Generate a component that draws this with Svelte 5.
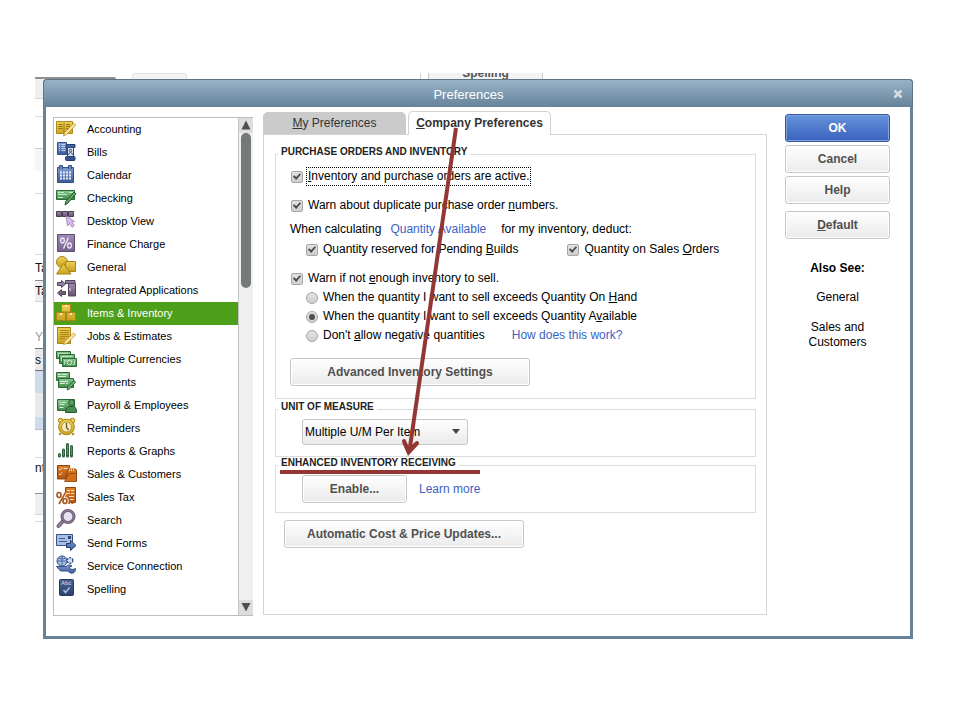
<script>
  const categories = [
    {
      name: 'Accounting',
      art: `<path d="M1.500 3.500H8l1 .7 1-.7h7.500v12H10l-1 .7-1-.7H1.500z" fill="url(#gold)" stroke="#b08a17"/><path d="M9 4.500V16" stroke="#a37d10"/><path d="M3.500 6.500h4M3.500 8.500h4M3.500 10.500h4M11 6.500h4M11 8.500h4M11 10.500h3" stroke="#8f6f10"/><path d="M8.500 18l1.200-3.500 9-9.300 2 1.800-8.900 9.500z" fill="#f6e4a0" stroke="#b8922a" stroke-width=".8"/>`
    },
    {
      name: 'Bills',
      art: `<path d="M2.500 1.500h9v12h-9z" fill="url(#blue)" stroke="#34508a"/><path d="M4 3.500h1m1.500 0h4M4 5.500h1m1.500 0h4M4 7.500h1m1.500 0h4M4 9.500h1m1.500 0h4" stroke="#c9d6f2"/><path d="M11 3.500h9v3h-9z" fill="#40649f" stroke="#243d70"/><path d="M12.500 6.500h6v10h-6z" fill="#e3e9f7" stroke="#2c467c"/><circle cx="15.500" cy="9.500" r="1.300" fill="none" stroke="#2c467c"/><path d="M13.800 14v-1.500l1.700-1 1.700 1V14" fill="none" stroke="#2c467c"/><rect x="10.500" y="15.500" width="9.500" height="4" rx="1" fill="#36538f" stroke="#243d70"/>`
    },
    {
      name: 'Calendar',
      art: `<path d="M2.500 3.500h16v15h-16z" fill="url(#blue)" stroke="#34508a"/><path d="M4.500 5V1.500h3V5M13.500 5V1.500h3V5" fill="#6d88bd" stroke="#34508a"/><path d="M5 8.500h11.500M5 11.500h11.500M5 14.500h11.500" stroke="#e6edfb" stroke-width="2" stroke-dasharray="2 1"/>`
    },
    {
      name: 'Checking',
      art: `<path d="M1.500 3.500h18v9h-18z" fill="url(#green)" stroke="#2c6b34"/><path d="M3 5.500h6M3 7.500h9M3 10.500h5M14 5.500h4" stroke="#c5eac8"/><path d="M10 18l.8-3.500 8.200-9.500 2 1.700-8.200 9.500z" fill="#5aa862" stroke="#22582a"/>`
    },
    {
      name: 'Desktop View',
      art: `<path d="M1.500 1.500h5v5h-5zM7.500 1.500h5v5h-5zM13.500 1.500h5v5h-5z" fill="url(#plum)" stroke="#4a3d52"/><path d="M11 5.500l8.500 6-2.800.5 2.500 3.500-2 1.700-2.700-3.700-2 2.500z" fill="#dcbcea" stroke="#9678a8" stroke-width=".8"/>`
    },
    {
      name: 'Finance Charge',
      art: `<path d="M2.500 1.500h17v17h-17z" fill="url(#purple)" stroke="#5e4f72"/><ellipse cx="7.500" cy="7.500" rx="1.800" ry="2.500" fill="none" stroke="#f0eaf6" stroke-width="1.300"/><ellipse cx="14.500" cy="12.500" rx="1.800" ry="2.500" fill="none" stroke="#f0eaf6" stroke-width="1.300"/><path d="M13.500 4.500l-5 11" stroke="#f0eaf6" stroke-width="1.300"/>`
    },
    {
      name: 'General',
      art: `<circle cx="7" cy="6" r="5.500" fill="url(#gold)" stroke="#a8841a"/><path d="M10.500 5.500h10v10h-10z" fill="url(#gold)" stroke="#a8841a"/><path d="M8.500 7.500l7.500 10.500H1.500z" fill="url(#gold)" stroke="#a8841a"/>`
    },
    {
      name: 'Integrated Applications',
      art: `<path d="M2.500 3.500h4v-2l4 3.500-4 3.500v-2h-4zM10.500 12.500h-4v-2l-4 3.500 4 3.500v-2h4z" fill="url(#plum)" stroke="#54455f"/><path d="M10.500 1.500h9.500v3h-9.500z" fill="#8c7a98" stroke="#54455f"/><path d="M13.500 4.500h7v12.500h-7z" fill="url(#plum)" stroke="#54455f"/><path d="M15 9v3" stroke="#efe6f5"/>`
    },
    {
      name: 'Items & Inventory',
      art: `<path d="M6.500 2.500h9v7.500h-9zM1.500 10.500h9v8h-9zM11.500 10.500h9v8h-9z" fill="url(#gold)" stroke="#a8841a"/><path d="M10 3h2v2h-2zM5 11h2v2h-2zM15 11h2v2h-2z" fill="#fbeeb0"/>`
    },
    {
      name: 'Jobs & Estimates',
      art: `<path d="M2.500 2.500h13v16h-13z" fill="url(#gold)" stroke="#a8841a"/><path d="M2 2.500h14" stroke="#8a6a10" stroke-dasharray="1 1"/><path d="M5 5.500h9M5 7.500h9M5 9.500h9M5 11.500h9M5 13.500h5" stroke="#a8841a"/><path d="M8.500 19.500l1.200-3 9-8.500 2 1.800-8.900 8.700z" fill="#fae6a8" stroke="#b8922a" stroke-width=".8"/>`
    },
    {
      name: 'Multiple Currencies',
      art: `<path d="M1.500 3.500h14v7h-14z" fill="url(#green)" stroke="#2c6b34"/><path d="M4.500 6.500h15v9h-15z" fill="url(#green)" stroke="#2c6b34"/><path d="M7.500 10.500h14v8h-14z" fill="url(#green)" stroke="#2c6b34"/><circle cx="14.500" cy="14.500" r="2.300" fill="none" stroke="#d5f2d6"/><path d="M9.500 16.500v-4h2M19.500 12.500v4h-2M3.500 9V5.500H13M6.500 13.500v-5H17" fill="none" stroke="#b7e2ba"/>`
    },
    {
      name: 'Payments',
      art: `<path d="M1.500 1.500h13v8h-13z" fill="url(#green)" stroke="#2c6b34"/><path d="M3 3.500h3m1 0h5M3 5.500h8" stroke="#d5f2d6"/><path d="M3.500 7.500h15v9h-15z" fill="url(#green)" stroke="#2c6b34"/><path d="M5 10.500h8M5 12.500h5m1 0h2" stroke="#d5f2d6"/><path d="M12 19l.8-3 6-6.500 1.800 1.500-6 6.800z" fill="#6bb873" stroke="#22582a" stroke-width=".9"/>`
    },
    {
      name: 'Payroll & Employees',
      art: `<path d="M2.500 5.500h17v11h-17z" fill="url(#green)" stroke="#2c6b34"/><path d="M4.500 8.500h2m1 0h3M4.500 10.500h5M4.500 13.500h4" stroke="#d5f2d6"/><path d="M10.500 18.500c0-4 2-5.500 4-6h4c2 .5 3 2 3 6z" fill="#4a8a53" stroke="#245a2c"/><circle cx="16.500" cy="8.500" r="3" fill="#5a9c63" stroke="#245a2c"/>`
    },
    {
      name: 'Reminders',
      art: `<path d="M5.500 16l-1 2M17.500 16l1 2" stroke="#a8841a" stroke-width="2"/><circle cx="5.500" cy="3.500" r="2.300" fill="#f0d35e" stroke="#a8841a"/><circle cx="17.500" cy="3.500" r="2.300" fill="#f0d35e" stroke="#a8841a"/><circle cx="11.500" cy="10" r="7.800" fill="url(#gold)" stroke="#a8841a"/><circle cx="11.500" cy="10" r="5" fill="#f5e9bd" stroke="#c29c28"/><path d="M11.500 6v4.500l2 2.500" fill="none" stroke="#6f5a1c" stroke-width="1.300"/>`
    },
    {
      name: 'Reports & Graphs',
      art: `<path d="M4.500 14.500v1.500M8.500 10v6M12.500 4.500V16M16.500 6.500V16" stroke="#2f5f3c" stroke-width="3" stroke-linecap="round"/><path d="M4.500 14v2M8.500 10v5.500M12.500 4.500V15M16.500 6.500V15" stroke="#5d946a"/>`
    },
    {
      name: 'Sales & Customers',
      art: `<path d="M2.500 2.500h12v13.500h-12z" fill="url(#orange)" stroke="#8f420c"/><path d="M4 6l1 1 2-2.500M4 11l1 1 2-2.500M8.500 5.500h4" fill="none" stroke="#fbe0c5"/><path d="M12.500 7.500l1-1.500h7l1 1.500v10.500h-8.500l-2.500-2z" fill="url(#orange)" stroke="#8f420c"/><path d="M14.500 8V5.500m2 2.500V5.500m2 2.500V5.500" stroke="#f8d0a8"/><path d="M9.500 18.500l4.500-8h7.500v8z" fill="#d0701d" stroke="#8f420c" stroke-width=".8"/>`
    },
    {
      name: 'Sales Tax',
      art: `<path d="M10.500 1.500h10v15h-1.500l-1.500 1-2-1-1.500 1-1.500-1h-2z" fill="url(#orange)" stroke="#8f420c"/><path d="M12 4.500h3m1 0h3M12 7.500h3m1 0h3M14 10.500h5M15 13.500h4" stroke="#fbe0c5"/><g stroke="#fff" stroke-width="3.500" fill="none"><ellipse cx="4" cy="9" rx="2" ry="2.500"/><ellipse cx="10" cy="15" rx="2" ry="2.500"/><path d="M10.500 6.500l-6.500 11.500"/></g><g stroke="#a9561a" stroke-width="1.600" fill="none"><ellipse cx="4" cy="9" rx="2" ry="2.500"/><ellipse cx="10" cy="15" rx="2" ry="2.500"/><path d="M10.500 6.500l-6.500 11.500"/></g>`
    },
    {
      name: 'Search',
      art: `<path d="M8.500 11.500L3.500 17" stroke="#6c5d78" stroke-width="4" stroke-linecap="round"/><path d="M8.500 11.500L3.500 17" stroke="#9888a4" stroke-width="1.500" stroke-linecap="round"/><circle cx="13" cy="7.500" r="6" fill="#e9e2f0" stroke="#6c5d78" stroke-width="3"/><circle cx="13" cy="7.500" r="6" stroke="#94849f" stroke-width="1"/>`
    },
    {
      name: 'Send Forms',
      art: `<path d="M1.500 2.500h16v11h-16z" fill="#a9bee3" stroke="#34508a"/><path d="M4 6.500h6M4 9.500h8" stroke="#3f5c96"/><path d="M13 4h3v3h-3z" fill="#2c467c"/><path d="M11.500 11.500h4v-3l5.500 5-5.500 5v-3h-4z" fill="url(#blue)" stroke="#243d70"/>`
    },
    {
      name: 'Service Connection',
      art: `<circle cx="7" cy="6" r="5" fill="#a9bee3" stroke="#34508a"/><path d="M7 1v10M2 6h10M3.500 3c2 1.200 5 1.200 7 0" fill="none" stroke="#4c6aa6"/><circle cx="15" cy="5.500" r="2.800" fill="#dbe5f7" stroke="#34508a" stroke-width="1.500" stroke-dasharray="2 1"/><path d="M1.500 11.500h9.500c2-2 4-2 6-.5l-2.500 1 .5 2 3 .5 2.500-1c.5 3-2 5.500-5 4.500l-3-2H5.500z" fill="url(#blue)" stroke="#34508a"/>`
    },
    {
      name: 'Spelling',
      art: `<rect x="4.500" y="1.500" width="14" height="16" rx="1" fill="url(#navy)" stroke="#26395c"/><text x="6" y="7" font-size="6" fill="#d3dcec">Abc</text><path d="M8.500 12l2 2.500 4-5" fill="none" stroke="#a9c0ea" stroke-width="1.500"/>`
    }
  ];

  const gradients = [
    ['gold', '#ecd056', '#c9a21c'],
    ['blue', '#7f9bd0', '#3c5b97'],
    ['green', '#8cc892', '#418a4b'],
    ['plum', '#a08dad', '#655372'],
    ['purple', '#9f8cb6', '#75638e'],
    ['orange', '#d97e2c', '#b4540d'],
    ['navy', '#4a6494', '#2c4168']
  ];

  const slices = [
    [1, '#949494'], [20, '#efefef'], [1, '#d5d5d5'], [17, '#fff'], [1, '#dcdcdc'],
    [31, '#fff'], [1, '#d0d0d0'], [22, '#f6f6f6'], [22, '#fff'], [1, '#dcdcdc'],
    [60, '#fff'], [1, '#dcdcdc'], [25, '#fff', 'Ta'], [1, '#8a8a8a'], [20, '#efefef', 'Ta'],
    [1, '#d5d5d5'], [24, '#fff'], [22, '#fff', 'YF', '#9b9b9b'], [1, '#6f6f6f'], [21, '#e9e9e9', 's'],
    [1, '#6f6f6f'], [22, '#cfdbe8'], [24, '#e9e9e9'], [12, '#cfdbe8'], [1, '#b9c3cc'],
    [27, '#fff'], [1, '#dcdcdc'], [20, '#fff', 'nt'], [15, '#fff'], [1, '#8f8f8f'], [20, '#efefef'],
    [1, '#d5d5d5'], [6, '#fff'], [1, '#dcdcdc']
  ];

  let selected = $state('Items & Inventory');
  let tab = $state('company');
  let active = $state(true);
  let duplicates = $state(true);
  let builds = $state(true);
  let orders = $state(true);
  let warn = $state(true);
  let mode = $state('available');
  let unit = $state('Multiple U/M Per Item');
</script>

<svg class="defs" width="0" height="0" aria-hidden="true">
  <defs>
    {#each gradients as [id, from, to]}
      <linearGradient {id} x1="0" y1="0" x2="0" y2="1">
        <stop offset="0" stop-color={from} />
        <stop offset="1" stop-color={to} />
      </linearGradient>
    {/each}
  </defs>
</svg>

<div class="screen">
  <div class="behind" aria-hidden="true">
    <div class="behind-top">
      <span class="edge"></span>
      <span class="stub"></span>
      <span class="rule"></span>
      <span class="peek"><span>Spelling</span></span>
    </div>
    <div class="behind-left">
      {#each slices as [height, fill, text, ink]}
        <div style:height="{height}px" style:background={fill} style:color={ink ?? '#111'}>{text ?? ''}</div>
      {/each}
    </div>
  </div>

  <main class="dialog">
    <header>
      <h1>Preferences</h1>
      <button class="close" aria-label="Close">
        <svg width="10" height="10" viewBox="0 0 10 10"><path d="M1.500 1.500l7 7M8.500 1.500l-7 7" stroke="#d5dce1" stroke-width="2.600" /></svg>
      </button>
    </header>

    <div class="body">
      <nav class="list">
        <ul>
          {#each categories as c}
            <li>
              <button class:selected={selected === c.name} onclick={() => (selected = c.name)}>
                <svg width="22" height="23" viewBox="0 0 22 23" fill="none">{@html c.art}</svg>
                <span>{c.name}</span>
              </button>
            </li>
          {/each}
        </ul>
        <div class="scroll" aria-hidden="true">
          <svg width="14" height="15" viewBox="0 0 14 15"><path d="M7 2.500l4.500 9h-9z" fill="#505050" /></svg>
          <div class="track"><div class="thumb"></div></div>
          <svg width="14" height="15" viewBox="0 0 14 15"><path d="M7 11.500L2.500 3h9z" fill="#505050" /></svg>
        </div>
      </nav>

      <section class="content">
        <div class="tabs" role="tablist">
          <button role="tab" aria-selected={tab === 'my'} onclick={() => (tab = 'my')}><u>M</u>y Preferences</button>
          <button role="tab" aria-selected={tab === 'company'} onclick={() => (tab = 'company')}><u>C</u>ompany Preferences</button>
        </div>

        <div class="panel" role="tabpanel">
          <fieldset class="orders">
            <legend>PURCHASE ORDERS AND INVENTORY</legend>
            <label class="row"><input type="checkbox" bind:checked={active} /><span class="focused"><u>I</u>nventory and purchase orders are active.</span></label>
            <label class="row apart"><input type="checkbox" bind:checked={duplicates} /><span>Warn about duplicate purchase order <u>n</u>umbers.</span></label>
            <div class="row calc"><span>When calculating</span><a href="#quantity">Quantity Available</a><span class="after">for my inventory, deduct:</span></div>
            <div class="row pair">
              <label class="row"><input type="checkbox" bind:checked={builds} /><span>Quantity reserved for Pending <u>B</u>uilds</span></label>
              <label class="row"><input type="checkbox" bind:checked={orders} /><span>Quantity on Sales <u>O</u>rders</span></label>
            </div>
            <label class="row apart"><input type="checkbox" bind:checked={warn} /><span>Warn if not <u>e</u>nough inventory to sell.</span></label>
            <label class="row inset"><input type="radio" name="mode" value="hand" bind:group={mode} /><span>When the quantity I want to sell exceeds Quantity On <u>H</u>and</span></label>
            <label class="row inset"><input type="radio" name="mode" value="available" bind:group={mode} /><span>When the quantity I want to sell exceeds Quantity A<u>v</u>ailable</span></label>
            <div class="row inset help">
              <label class="row"><input type="radio" name="mode" value="negative" bind:group={mode} /><span>Don't <u>a</u>llow negative quantities</span></label>
              <a href="#how">How does this work?</a>
            </div>
            <button class="btn wide">Advanced Inventory Settings</button>
          </fieldset>

          <fieldset class="unit">
            <legend>UNIT OF MEASURE</legend>
            <div class="select">
              <select aria-label="Unit of measure" bind:value={unit}>
                <option>Multiple U/M Per Item</option>
                <option>Single U/M Per Item</option>
              </select>
              <svg width="10" height="6" viewBox="0 0 10 6"><path d="M1 0h8L5 5z" fill="#444" /></svg>
            </div>
          </fieldset>

          <fieldset class="receiving">
            <legend>ENHANCED INVENTORY RECEIVING</legend>
            <div class="enable">
              <button class="btn">Enable...</button>
              <a href="#learn">Learn more</a>
            </div>
          </fieldset>

          <button class="btn wide auto">Automatic Cost &amp; Price Updates...</button>
        </div>

        <svg class="arrow" width="220" height="370" viewBox="0 0 220 370" aria-hidden="true">
          <g fill="none" stroke="#943634" stroke-width="4">
            <path d="M193 17L147 336" />
            <path d="M141 330l4.500 10 8.500-8" stroke-linecap="round" />
            <path d="M17 361h200" />
          </g>
          <path d="M139 331l6 14 11-12-9 3z" fill="#943634" />
        </svg>
      </section>

      <aside>
        <button class="btn primary">OK</button>
        <button class="btn">Cancel</button>
        <button class="btn">Help</button>
        <button class="btn default"><u>D</u>efault</button>
        <h2>Also See:</h2>
        <a href="#general">General</a>
        <a href="#sales">Sales and Customers</a>
      </aside>
    </div>
  </main>
</div>

<style>
  :global(body) { margin: 0; background: #fff; }
  .defs { position: absolute; }
  .screen {
    position: relative;
    padding: 79px 47px 82px 43px;
    font: 12px/15px "Liberation Sans", Arial, sans-serif;
    color: #000;
  }
  .screen :is(button, select, input) { font: inherit; color: inherit; margin: 0; box-sizing: border-box; }
  a { color: #3a62c4; text-decoration: none; }
  u { text-underline-offset: 1px; }

  .behind { position: absolute; top: 73px; left: 35px; right: 47px; }
  .behind-top { display: flex; height: 6px; }
  .behind-top span { box-sizing: border-box; }
  .behind-top .edge { width: 81px; height: 2px; margin-top: 4px; background: #8f8f8f; border-radius: 0 2px 0 0; }
  .behind-top .stub { width: 55px; margin-left: 16px; background: #f4f4f4; border: 1px solid #e2e2e2; border-bottom: 0; border-radius: 3px 3px 0 0; }
  .behind-top .rule { width: 1px; margin-left: 233px; background: #d5d5d5; }
  .behind-top .peek { display: flex; align-items: flex-end; justify-content: center; width: 115px; margin-left: 7px; overflow: hidden; background: #f3f3f3; border: solid #c9c9c9; border-width: 0 1px; font-weight: bold; color: #555; }
  .peek span { line-height: 12px; }
  .behind-left { width: 8px; margin-top: -2px; overflow: hidden; }
  .behind-left div { display: flex; align-items: center; overflow: hidden; white-space: nowrap; line-height: 14px; }

  .dialog { position: relative; box-sizing: border-box; background: #fff; border: solid #67839a; border-width: 0 3px 3px; border-radius: 4px 4px 0 0; }
  header { display: flex; align-items: center; height: 28px; margin: 0 -3px; padding: 0 9px 0 20px; box-sizing: border-box; border: 1px solid #5c7587; border-bottom: 0; border-radius: 4px 4px 0 0; background: linear-gradient(#98b2c8, #66839a); }
  h1 { flex: 1; margin: 0; padding: 2px 20px 0 0; font-size: 13px; line-height: 16px; font-weight: normal; text-align: center; color: #fff; }
  .close { display: flex; padding: 0; border: 0; background: none; }

  .body { display: flex; align-items: flex-start; padding: 4px 20px 20px 7px; }
  .list { display: flex; width: 200px; height: 499px; margin-top: 6px; box-sizing: border-box; border: 1px solid #bdbdbd; border-right: 0; }
  ul { flex: 1; margin: 0; padding: 0; list-style: none; }
  li button { display: flex; align-items: center; gap: 10px; width: 100%; height: 23px; padding: 0 0 0 1px; border: 0; background: none; line-height: 13px; text-align: left; white-space: nowrap; }
  .list li button { font-size: 11px; }
  .list li button.selected { background: #4e9f19; color: #fff; }
  .scroll { display: flex; flex-direction: column; width: 14px; border-left: 1px solid #c4c4c4; background: #f0f0f0; }
  .scroll svg { background: #dedede; }
  .track { flex: 1; padding: 0 1px 0 2px; }
  .thumb { width: 10px; height: 155px; border-radius: 5px; background: #737a79; }

  .content { position: relative; flex: 1; min-width: 0; margin: 0 18px 0 10px; }
  .tabs { display: flex; align-items: flex-end; gap: 2px; }
  .tabs button { width: 143px; height: 22px; padding: 0; border: 0; border-radius: 5px 5px 0 0; background: #cbcbcb; color: #333; white-space: nowrap; }
  .tabs button[aria-selected='true'] { position: relative; height: 24px; margin-bottom: -1px; border: 1px solid #d2d2d2; border-bottom: 0; background: #fff; font-weight: bold; }
  .panel { box-sizing: border-box; min-height: 481px; padding: 11px 10px 12px 11px; border: 1px solid #d4d4d4; }

  fieldset { min-width: 0; margin: 0; padding: 0 14px 12px; border: 1px solid #dcdcdc; }
  legend { margin-left: -12px; padding: 0 3px 4px; font-size: 10px; line-height: 12px; font-weight: bold; color: #222; }
  .orders { padding-top: 5px; }
  .unit { margin-top: 2px; padding: 2px 26px 11px; }
  .receiving { padding: 2px 26px 9px; }
  .unit legend, .receiving legend { margin-left: -24px; }

  .row { display: flex; align-items: center; height: 19px; white-space: nowrap; }
  .row input { flex: none; appearance: none; width: 12px; height: 12px; border: 1px solid #a6a6a6; border-radius: 2px; background: linear-gradient(#e2e2e2, #cfcfcf); }
  label.row { gap: 5px; }
  label.row input[type='checkbox'] { display: grid; place-items: center; margin-left: 1px; }
  .row input[type='checkbox']:checked::before { content: ''; width: 6px; height: 3px; margin-bottom: 2px; border: solid #4a4a4a; border-width: 0 0 2px 2px; box-sizing: content-box; transform: rotate(-48deg) scale(0.9); }
  .row input[type='radio'] { display: grid; place-items: center; border-radius: 50%; }
  .row input[type='radio']:checked::before { content: ''; width: 6px; height: 6px; border-radius: 50%; background: #4f4f4f; }
  .focused { outline: 1px dotted #000; outline-offset: 1px; }
  .apart { margin-top: 10px; }
  .calc { gap: 9px; margin: 5px 0 1px; }
  .calc .after { margin-left: 6px; }
  .pair { gap: 48px; padding-left: 15px; }
  .inset { padding-left: 16px; }
  .help { gap: 27px; }

  .btn { display: block; width: 105px; height: 28px; padding: 0; border: 1px solid #c6c6c6; border-radius: 3px; background: linear-gradient(#fefefe, #ebebeb); box-shadow: inset 0 0 0 1px #fff; white-space: nowrap; }
  .screen .btn { font-weight: bold; color: #505050; }
  .btn.wide { width: 240px; }
  .orders .btn.wide { margin-top: 13px; }
  .panel .btn.auto { margin: 7px 0 0 9px; }
  .select { display: flex; align-items: center; position: relative; width: 166px; }
  select { width: 100%; height: 26px; padding: 0 20px 0 2px; appearance: none; border: 1px solid #c6c6c6; border-radius: 3px; background: linear-gradient(#fefefe, #ebebeb); }
  .select svg { position: absolute; right: 7px; pointer-events: none; }
  .enable { display: flex; align-items: center; gap: 12px; }
  .arrow { position: absolute; top: 0; left: 0; pointer-events: none; }

  aside { display: flex; flex-direction: column; gap: 3px; width: 105px; margin-top: 3px; text-align: center; }
  .screen .btn.primary { color: #fff; border-color: #34569c; background: linear-gradient(#6593da, #3a62bf); box-shadow: inset 0 0 0 1px #7fa3e0; }
  aside .btn.default { margin-top: 4px; }
  h2 { margin: 19px 0 11px; font-size: 12px; line-height: 15px; }
  aside a { padding: 0 16px 12px; color: #000; }
</style>
